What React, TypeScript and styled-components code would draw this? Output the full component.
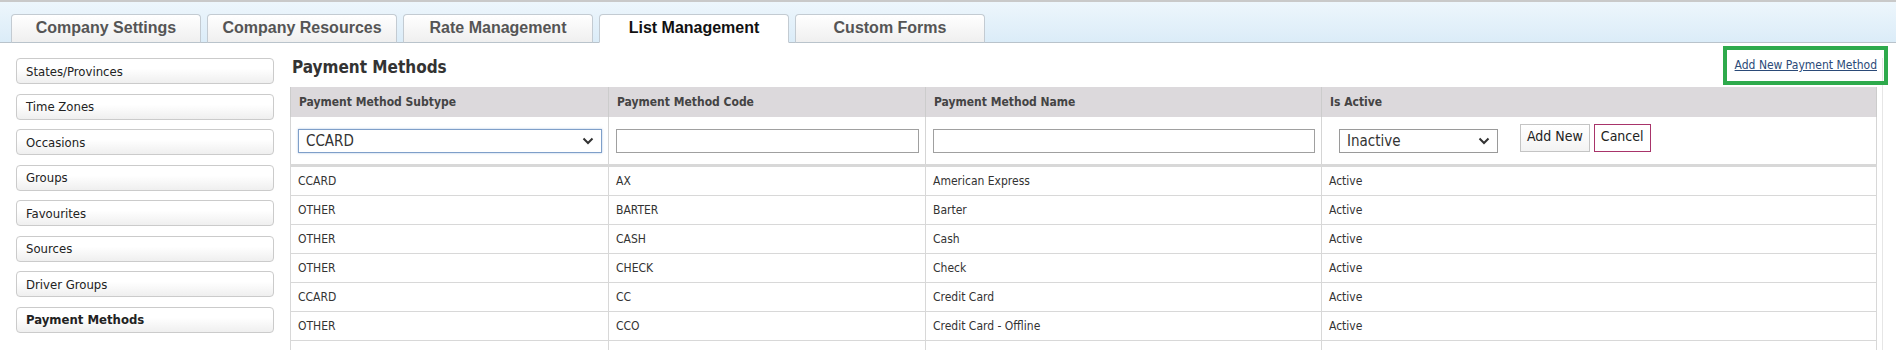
import { useState } from "react";
import styled, { createGlobalStyle } from "styled-components";

const GlobalStyle = createGlobalStyle`
  body {
    margin: 0;
    background: #fff;
    font-family: "DejaVu Sans Condensed", Tahoma, "Liberation Sans", sans-serif;
    color: #333;
  }
`;

const tabs = [
  "Company Settings",
  "Company Resources",
  "Rate Management",
  "List Management",
  "Custom Forms",
];

const lists = [
  "States/Provinces",
  "Time Zones",
  "Occasions",
  "Groups",
  "Favourites",
  "Sources",
  "Driver Groups",
  "Payment Methods",
];

const rows = [
  ["CCARD", "AX", "American Express", "Active"],
  ["OTHER", "BARTER", "Barter", "Active"],
  ["OTHER", "CASH", "Cash", "Active"],
  ["OTHER", "CHECK", "Check", "Active"],
  ["CCARD", "CC", "Credit Card", "Active"],
  ["OTHER", "CCO", "Credit Card - Offline", "Active"],
  ["", "", "", ""],
];

const Chevron = () => (
  <svg width="12" height="8" viewBox="0 0 12 8">
    <path d="M1.5 1.5 L6 6 L10.5 1.5" fill="none" stroke="#333" strokeWidth="2" />
  </svg>
);

export default function App() {
  const [activeTab, setActiveTab] = useState("List Management");
  const [activeList, setActiveList] = useState("Payment Methods");

  return (
    <>
      <GlobalStyle />
      <TabBar>
        {tabs.map((t) => (
          <Tab key={t} active={t === activeTab} onClick={() => setActiveTab(t)}>
            {t}
          </Tab>
        ))}
      </TabBar>
      <Body>
        <Sidebar>
          {lists.map((l) => (
            <ListButton key={l} active={l === activeList} onClick={() => setActiveList(l)}>
              {l}
            </ListButton>
          ))}
        </Sidebar>
        <Main>
          <TitleRow>
            <Title>Payment Methods</Title>
            <AddLink href="#">Add New Payment Method</AddLink>
          </TitleRow>
          <Table>
            <colgroup>
              <col style={{ width: 318 }} />
              <col style={{ width: 317 }} />
              <col style={{ width: 396 }} />
              <col />
            </colgroup>
            <thead>
              <tr>
                <Th>Payment Method Subtype</Th>
                <Th>Payment Method Code</Th>
                <Th>Payment Method Name</Th>
                <Th>Is Active</Th>
              </tr>
            </thead>
            <tbody>
              <EditRow>
                <EditCell>
                  <SelectWrap>
                    <Select focused defaultValue="CCARD">
                      <option>CCARD</option>
                      <option>OTHER</option>
                    </Select>
                    <ChevronBox>
                      <Chevron />
                    </ChevronBox>
                  </SelectWrap>
                </EditCell>
                <EditCell>
                  <TextInput type="text" />
                </EditCell>
                <EditCell>
                  <TextInput type="text" />
                </EditCell>
                <EditCell>
                  <ActiveControls>
                    <SelectWrap width="159px">
                      <Select defaultValue="Inactive">
                        <option>Active</option>
                        <option>Inactive</option>
                      </Select>
                      <ChevronBox>
                        <Chevron />
                      </ChevronBox>
                    </SelectWrap>
                    <Buttons>
                      <FormButton>Add New</FormButton>
                      <FormButton cancel>Cancel</FormButton>
                    </Buttons>
                  </ActiveControls>
                </EditCell>
              </EditRow>
              {rows.map((r, i) => (
                <tr key={i}>
                  {r.map((c, j) => (
                    <Td key={j}>{c}</Td>
                  ))}
                </tr>
              ))}
            </tbody>
          </Table>
        </Main>
        <ScrollTrack />
      </Body>
    </>
  );
}

const TabBar = styled.div`
  display: flex;
  align-items: flex-end;
  gap: 6px;
  height: 40px;
  padding-left: 11px;
  border-top: 2px solid #c9c9c9;
  border-bottom: 1px solid #b9c3cb;
  background: linear-gradient(to bottom, #edf6fc, #dbecf8);
  box-sizing: content-box;
`;

const Tab = styled.div<{ active?: boolean }>`
  width: 190px;
  height: 29px;
  margin-bottom: -1px;
  display: flex;
  align-items: center;
  justify-content: center;
  box-sizing: border-box;
  border: 1px solid #c3cbd2;
  border-bottom: ${(p) => (p.active ? "1px solid #fff" : "1px solid #b9c3cb")};
  border-radius: 4px 4px 0 0;
  background: ${(p) =>
    p.active ? "#fff" : "linear-gradient(to bottom, #ffffff, #efefef)"};
  font-family: "Liberation Sans", Arial, sans-serif;
  font-weight: bold;
  font-size: 16px;
  color: ${(p) => (p.active ? "#111" : "#555")};
  padding-bottom: 2px;
  cursor: pointer;
`;

const Body = styled.div`
  display: flex;
  align-items: flex-start;
  padding-top: 15px;
`;

const Sidebar = styled.div`
  display: flex;
  flex-direction: column;
  gap: 9.5px;
  width: 258px;
  margin-left: 16px;
  flex-shrink: 0;
`;

const ListButton = styled.div<{ active?: boolean }>`
  height: 26px;
  box-sizing: border-box;
  display: flex;
  align-items: center;
  padding-left: 9px;
  border: 1px solid #cbcbcb;
  border-radius: 4px;
  background: linear-gradient(to bottom, #ffffff 40%, #efefef);
  font-size: 13px;
  font-weight: ${(p) => (p.active ? "bold" : "normal")};
  color: #222;
  cursor: pointer;
`;

const Main = styled.div`
  margin-left: 16px;
  width: 1587px;
  flex-shrink: 0;
`;

const TitleRow = styled.div`
  display: flex;
  justify-content: space-between;
  align-items: flex-start;
  height: 29px;
`;

const Title = styled.h2`
  margin: -1px 0 0 2px;
  font-size: 17px;
  line-height: 20px;
  font-weight: bold;
  color: #333;
`;

const AddLink = styled.a`
  position: relative;
  margin-top: 0;
  font-size: 12px;
  line-height: 14px;
  color: #2b4a78;
  text-decoration: underline;

  &::after {
    content: "";
    position: absolute;
    left: -12px;
    right: -11px;
    top: -12px;
    bottom: -13px;
    border: 4px solid #2eaa4c;
  }
`;

const Table = styled.table`
  width: 100%;
  border-collapse: collapse;
  table-layout: fixed;
  border-left: 1px solid #d5d5d5;
  border-right: 1px solid #d5d5d5;
`;

const Th = styled.th`
  height: 30px;
  padding: 0 8px;
  text-align: left;
  background: #dcd9dc;
  color: #444;
  font-size: 12px;
  font-weight: bold;
  border-left: 1px solid #ccc;
  border-right: 1px solid #ccc;
`;

const EditRow = styled.tr`
  border-bottom: 3px solid #d8d8d8;
`;

const EditCell = styled.td`
  height: 47px;
  padding: 0 6px 0 7px;
  border-left: 1px solid #d5d5d5;
  border-right: 1px solid #d5d5d5;
  vertical-align: middle;
`;

const SelectWrap = styled.div<{ width?: string }>`
  position: relative;
  width: ${(p) => p.width || "100%"};
  flex-shrink: 0;
`;

const Select = styled.select<{ focused?: boolean }>`
  appearance: none;
  width: 100%;
  height: 24px;
  box-sizing: border-box;
  padding: 0 24px 0 7px;
  border: 1px solid ${(p) => (p.focused ? "#7f9fc9" : "#9a9a9a")};
  box-shadow: ${(p) => (p.focused ? "0 0 2px rgba(90, 140, 200, 0.5)" : "none")};
  border-radius: 0;
  background: #fff;
  font-family: "DejaVu Sans Condensed", Tahoma, "Liberation Sans", sans-serif;
  font-size: 15px;
  color: #333;
  outline: none;
`;

const ChevronBox = styled.span`
  position: absolute;
  right: 8px;
  top: 8px;
  display: flex;
  pointer-events: none;
`;

const TextInput = styled.input`
  width: 100%;
  height: 24px;
  box-sizing: border-box;
  border: 1px solid #a0a0a0;
  font-size: 14px;
`;

const ActiveControls = styled.div`
  display: flex;
  align-items: flex-start;
  padding-left: 10px;
`;

const Buttons = styled.div`
  display: flex;
  gap: 4px;
  margin-left: 22px;
  margin-top: -5px;
`;

const FormButton = styled.button<{ cancel?: boolean }>`
  height: 28px;
  padding: 0 6px;
  border: 1px solid ${(p) => (p.cancel ? "#a8346a" : "#c4c4c4")};
  border-radius: 0;
  background: ${(p) => (p.cancel ? "#fff" : "linear-gradient(to bottom, #fff, #f3f3f3)")};
  font-family: "DejaVu Sans Condensed", Tahoma, "Liberation Sans", sans-serif;
  font-size: 14px;
  color: #222;
  padding-bottom: 4px;
`;

const Td = styled.td`
  height: 28px;
  padding: 0 7px;
  font-size: 12px;
  color: #333;
  border: 1px solid #d8d8d8;
  white-space: nowrap;
`;

const ScrollTrack = styled.div`
  align-self: stretch;
  width: 1px;
  margin-left: 5px;
  background: #e6e6e6;
  min-height: 300px;
`;
